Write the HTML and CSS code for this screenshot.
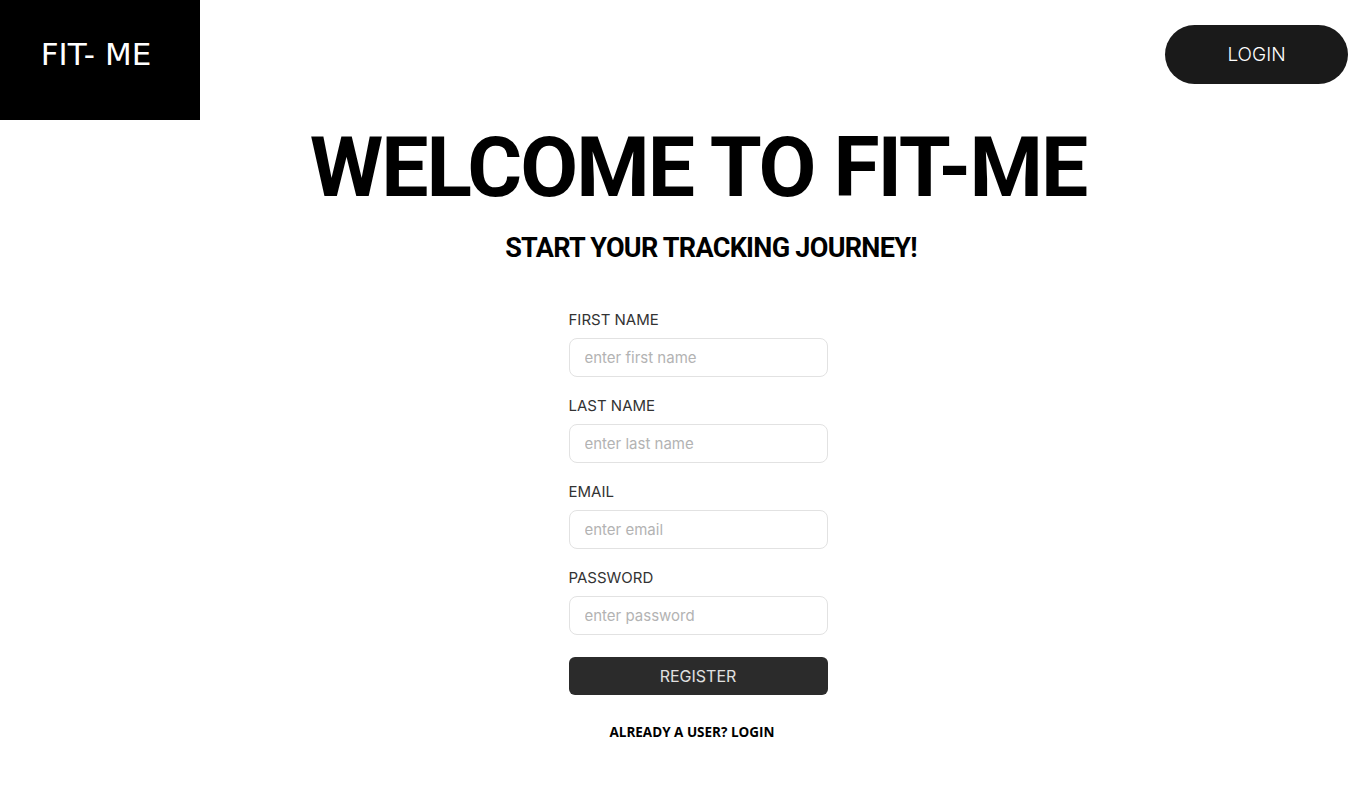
FILE: index.html
```html
<!DOCTYPE html>
<html lang="en">
<head>
    <meta charset="UTF-8">
    <meta name="viewport" content="width=device-width, initial-scale=1.0">
    <title>Fit-Me Register</title>
    <link rel="stylesheet" href="styles.css">
</head>
<body>
    <header class="topbar">
        <div class="logo">FIT- ME</div>
        <button class="login-btn">LOGIN</button>
    </header>

    <main class="content">
        <h1 class="title">WELCOME TO FIT-ME</h1>
        <h2 class="subtitle">START YOUR TRACKING JOURNEY!</h2>

        <form class="register-form" onsubmit="return false;">
            <div class="field">
                <label for="firstName">FIRST NAME</label>
                <input id="firstName" type="text" placeholder="enter first name">
            </div>
            <div class="field">
                <label for="lastName">LAST NAME</label>
                <input id="lastName" type="text" placeholder="enter last name">
            </div>
            <div class="field">
                <label for="email">EMAIL</label>
                <input id="email" type="email" placeholder="enter email">
            </div>
            <div class="field">
                <label for="password">PASSWORD</label>
                <input id="password" type="password" placeholder="enter password">
            </div>
            <button class="register-btn" type="submit">REGISTER</button>
            <a class="switch-link" href="#">ALREADY A USER? LOGIN</a>
        </form>
    </main>
</body>
</html>
```

FILE: styles.css
```css
body {
    margin: 0;
    background: #fff;
    font-family: "Open Sans", Arial, sans-serif;
    color: #000;
}
.topbar {
    display: flex;
    justify-content: space-between;
    align-items: flex-start;
    height: 120px;
}
.logo {
    width: 200px;
    height: 120px;
    background: #000;
    color: #fff;
    display: flex;
    align-items: center;
    justify-content: center;
    font-family: "DejaVu Sans", sans-serif;
    font-size: 31px;
    box-sizing: border-box;
    padding: 0 8px 12px 0;
}
.login-btn {
    margin: 25px 18px 0 0;
    width: 183px;
    height: 59px;
    border: none;
    border-radius: 30px;
    background: #1a1a1a;
    color: #fff;
    font-family: "Inter", sans-serif;
    font-size: 19px;
    font-weight: 300;
    cursor: pointer;
}
.content {
    display: flex;
    flex-direction: column;
    align-items: center;
    padding-left: 30px;
}
.title {
    margin: 0;
    font-family: "Roboto", sans-serif;
    font-size: 84px;
    font-weight: 700;
    letter-spacing: -2px;
    line-height: 96px;
}
.subtitle {
    margin: 16px 0 0 0;
    padding-left: 26px;
    font-family: "Roboto", sans-serif;
    font-size: 27px;
    font-weight: 700;
    letter-spacing: -0.7px;
}
.register-form {
    width: 259px;
    margin-top: 46px;
    display: flex;
    flex-direction: column;
}
.field {
    display: flex;
    flex-direction: column;
    margin-bottom: 19px;
}
.field label {
    font-family: "Inter", sans-serif;
    font-size: 15px;
    color: #333;
    margin-bottom: 9px;
}
.field input {
    height: 39px;
    box-sizing: border-box;
    border: 1px solid #e2e2e2;
    border-radius: 8px;
    padding: 0 15px;
    font-family: "Inter", sans-serif;
    font-size: 15px;
    color: #333;
}
.field input::placeholder { color: #b3b3b3; }
.register-btn {
    margin-top: 3px;
    height: 38px;
    border: none;
    border-radius: 6px;
    background: #2b2b2b;
    color: #e0e0e0;
    font-family: "Inter", sans-serif;
    font-size: 16px;
    cursor: pointer;
}
.switch-link {
    margin-top: 28px;
    align-self: center;
    padding-right: 12px;
    font-family: "Open Sans", sans-serif;
    font-size: 13.5px;
    font-weight: 700;
    color: #000;
    text-decoration: none;
}
```
